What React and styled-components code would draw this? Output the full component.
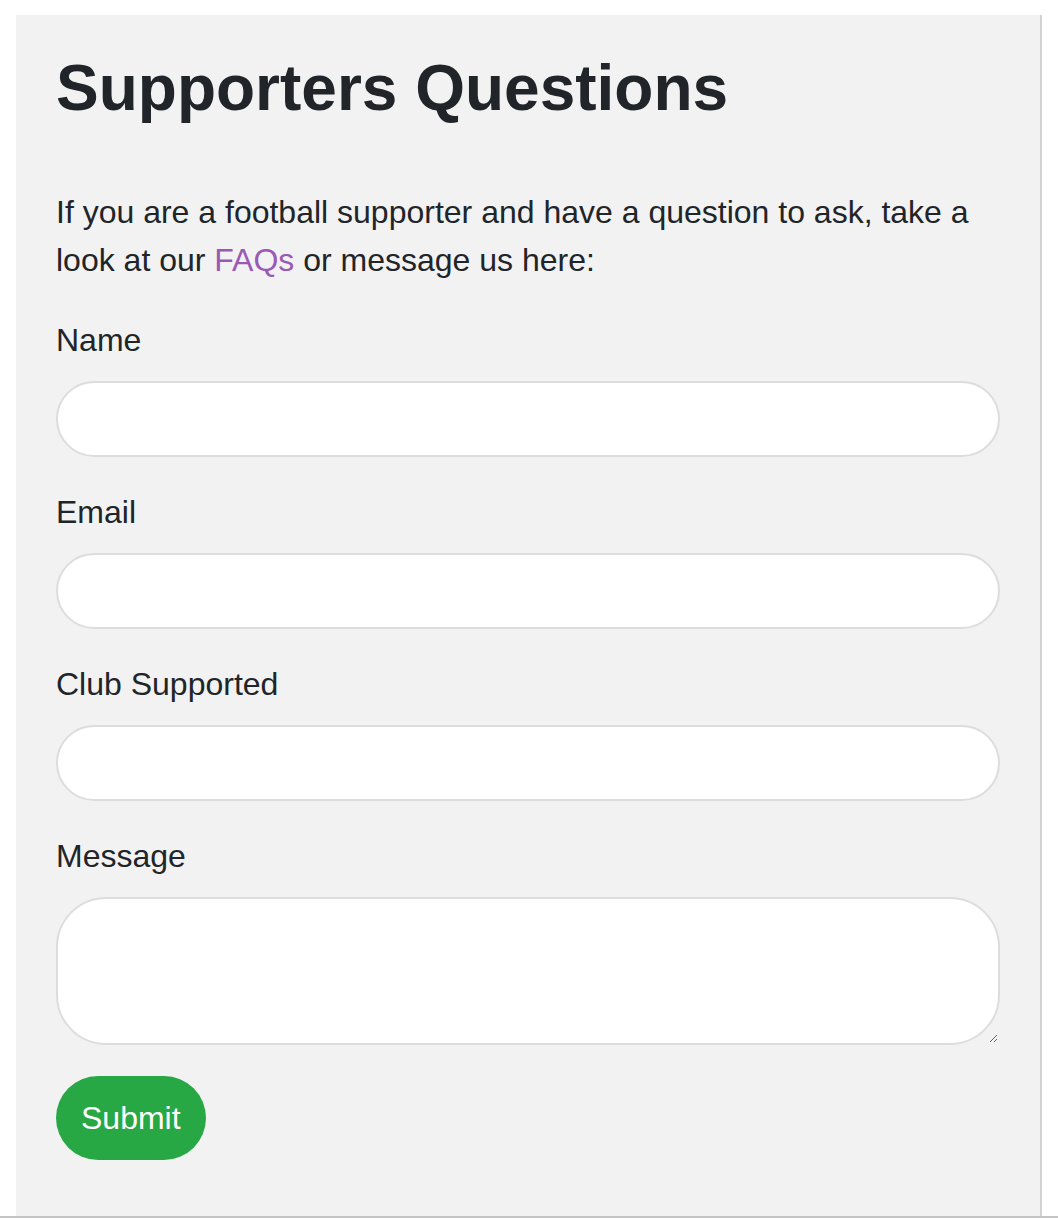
import React from 'react'
import styled, { createGlobalStyle } from 'styled-components'

const GlobalStyle = createGlobalStyle`
  html, body {
    margin: 0;
    padding: 0;
    background: #ffffff;
  }
  body {
    font-family: "Liberation Sans", Arial, Helvetica, sans-serif;
    color: #212529;
  }
  * {
    box-sizing: border-box;
  }
`;

const Page = styled.div`
  display: flex;
  height: 1218px;
  padding: 15px 0 0 16px;
  border-bottom: 2px solid #c4c4c4;
  overflow: hidden;
`;

const Panel = styled.section`
  width: 1026px;
  background: #f2f2f2;
  border-right: 2px solid #d2d2d2;
  padding: 35px 40px 0;
`;

const Title = styled.h1`
  margin: 0 0 61px;
  font-size: 64px;
  font-weight: 700;
  line-height: 1.2;
  color: #212529;
`;

const Intro = styled.p`
  margin: 0 0 32px;
  font-size: 32px;
  line-height: 1.5;
`;

const FaqLink = styled.a`
  color: #9b59b6;
  text-decoration: none;
`;

const Form = styled.form`
  display: flex;
  flex-direction: column;
`;

const Group = styled.div`
  display: flex;
  flex-direction: column;
  margin-bottom: 31px;
`;

const Label = styled.label`
  font-size: 32px;
  line-height: 1.5;
  margin-bottom: 17px;
`;

const Input = styled.input`
  width: 944px;
  height: 76px;
  padding: 12px 24px;
  font: inherit;
  font-size: 32px;
  background: #ffffff;
  border: 2px solid #dddddd;
  border-radius: 38px;
  outline: none;
`;

const TextArea = styled.textarea`
  width: 944px;
  height: 148px;
  padding: 12px 24px;
  font: inherit;
  font-size: 32px;
  background: #ffffff;
  border: 2px solid #dddddd;
  border-radius: 50px;
  outline: none;
  display: block;
`;

const SubmitButton = styled.button`
  align-self: flex-start;
  padding: 18px 25px;
  font-family: inherit;
  font-size: 32px;
  line-height: 1.5;
  color: #ffffff;
  background: #28a745;
  border: none;
  border-radius: 42px;
  cursor: pointer;
`;

const fields = [
  { id: 'name', label: 'Name' },
  { id: 'email', label: 'Email' },
  { id: 'club', label: 'Club Supported' },
];

const App = () => {
  return (
    <>
      <GlobalStyle />
      <Page>
        <Panel>
          <Title>Supporters Questions</Title>
          <Intro>
            If you are a football supporter and have a question to ask, take a
            look at our <FaqLink href="#faqs">FAQs</FaqLink> or message us here:
          </Intro>
          <Form onSubmit={e => e.preventDefault()}>
            {fields.map(field => (
              <Group key={field.id}>
                <Label htmlFor={field.id}>{field.label}</Label>
                <Input id={field.id} type="text" />
              </Group>
            ))}
            <Group>
              <Label htmlFor="message">Message</Label>
              <TextArea id="message" />
            </Group>
            <SubmitButton type="submit">Submit</SubmitButton>
          </Form>
        </Panel>
      </Page>
    </>
  )
}

export default App
